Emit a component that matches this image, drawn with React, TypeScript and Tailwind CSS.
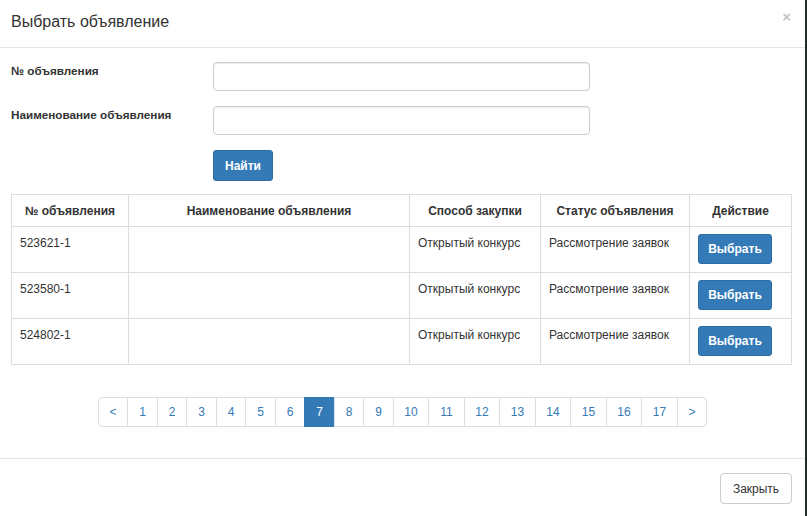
import React from 'react';

const rows = [
  { id: '523621-1', method: 'Открытый конкурс', status: 'Рассмотрение заявок' },
  { id: '523580-1', method: 'Открытый конкурс', status: 'Рассмотрение заявок' },
  { id: '524802-1', method: 'Открытый конкурс', status: 'Рассмотрение заявок' },
];

const pages = ['<', '1', '2', '3', '4', '5', '6', '7', '8', '9', '10', '11', '12', '13', '14', '15', '16', '17', '>'];

export default function App() {
  return (
    <div className="flex h-[516px] w-[807px] font-['Liberation_Sans',Arial,sans-serif] text-[12px] text-[#333]">
      <div className="flex w-[805px] flex-col bg-white">
        {/* Header */}
        <div className="flex h-[48px] items-start justify-between border-b border-[#e5e5e5] pl-[11px] pr-[14px]">
          <h4 className="pt-[12px] text-[16px] leading-[20px] text-[#333]">Выбрать объявление</h4>
          <span className="pt-[7px] text-[15px] font-bold leading-[20px] text-[#c4c4c4]">×</span>
        </div>

        {/* Body */}
        <div className="flex flex-1 flex-col px-[11px] pt-[14px]">
          <div className="grid grid-cols-[202px_377px] gap-y-[15px]">
            <label className="pt-[1px] text-[11.7px] font-bold leading-[16px]">№ объявления</label>
            <input className="h-[29px] rounded-[4px] border border-[#ccc] px-3 shadow-[inset_0_1px_1px_rgba(0,0,0,0.075)] outline-none" />
            <label className="pt-[1px] text-[11.7px] font-bold leading-[16px]">Наименование объявления</label>
            <input className="h-[29px] rounded-[4px] border border-[#ccc] px-3 shadow-[inset_0_1px_1px_rgba(0,0,0,0.075)] outline-none" />
            <div />
            <div>
              <button className="h-[31px] w-[60px] rounded-[3px] border border-[#2e6da4] bg-[#337ab7] text-[12px] font-bold text-white">
                Найти
              </button>
            </div>
          </div>

          <table className="mt-[13px] w-[780px] table-fixed border-collapse">
            <colgroup>
              <col className="w-[117px]" />
              <col className="w-[281px]" />
              <col className="w-[131px]" />
              <col className="w-[149px]" />
              <col className="w-[102px]" />
            </colgroup>
            <thead>
              <tr className="h-[32px]">
                {['№ объявления', 'Наименование объявления', 'Способ закупки', 'Статус объявления', 'Действие'].map((h) => (
                  <th key={h} className="border border-[#ddd] px-2 text-center align-middle font-bold leading-[16px]">
                    {h}
                  </th>
                ))}
              </tr>
            </thead>
            <tbody>
              {rows.map((r) => (
                <tr key={r.id} className="h-[46px]">
                  <td className="border border-[#ddd] px-2 pt-[8px] align-top leading-[16px]">{r.id}</td>
                  <td className="border border-[#ddd] px-2 pt-[8px] align-top" />
                  <td className="border border-[#ddd] px-2 pt-[8px] align-top leading-[16px]">{r.method}</td>
                  <td className="border border-[#ddd] px-2 pt-[8px] align-top leading-[16px]">{r.status}</td>
                  <td className="border border-[#ddd] px-2 py-[7px] align-top">
                    <button className="h-[30px] w-[74px] rounded-[3px] border border-[#2e6da4] bg-[#337ab7] text-[12px] font-bold text-white">
                      Выбрать
                    </button>
                  </td>
                </tr>
              ))}
            </tbody>
          </table>

          <div className="mt-[32px] flex justify-center">
            <ul className="flex h-[30px]">
              {pages.map((p, i) => {
                const active = p === '7';
                const first = i === 0;
                const last = i === pages.length - 1;
                return (
                  <li
                    key={p}
                    className={`-ml-px flex items-center justify-center border leading-[16px] ${
                      p.length === 2 ? 'w-[36.5px]' : 'w-[30.5px]'
                    } ${active ? 'border-[#337ab7] bg-[#337ab7] text-white' : 'border-[#ddd] bg-white text-[#337ab7]'} ${
                      first ? 'ml-0 rounded-l-[4px]' : ''
                    } ${last ? 'rounded-r-[4px]' : ''}`}
                  >
                    {p}
                  </li>
                );
              })}
            </ul>
          </div>
        </div>

        {/* Footer */}
        <div className="flex h-[58px] items-start justify-end border-t border-[#e5e5e5] pr-[13px] pt-[14px]">
          <button className="h-[31px] w-[72px] rounded-[4px] border border-[#ccc] bg-white text-[12px] text-[#333]">
            Закрыть
          </button>
        </div>
      </div>
      <div className="w-[2px] bg-[#1e2b2b]" />
    </div>
  );
}
